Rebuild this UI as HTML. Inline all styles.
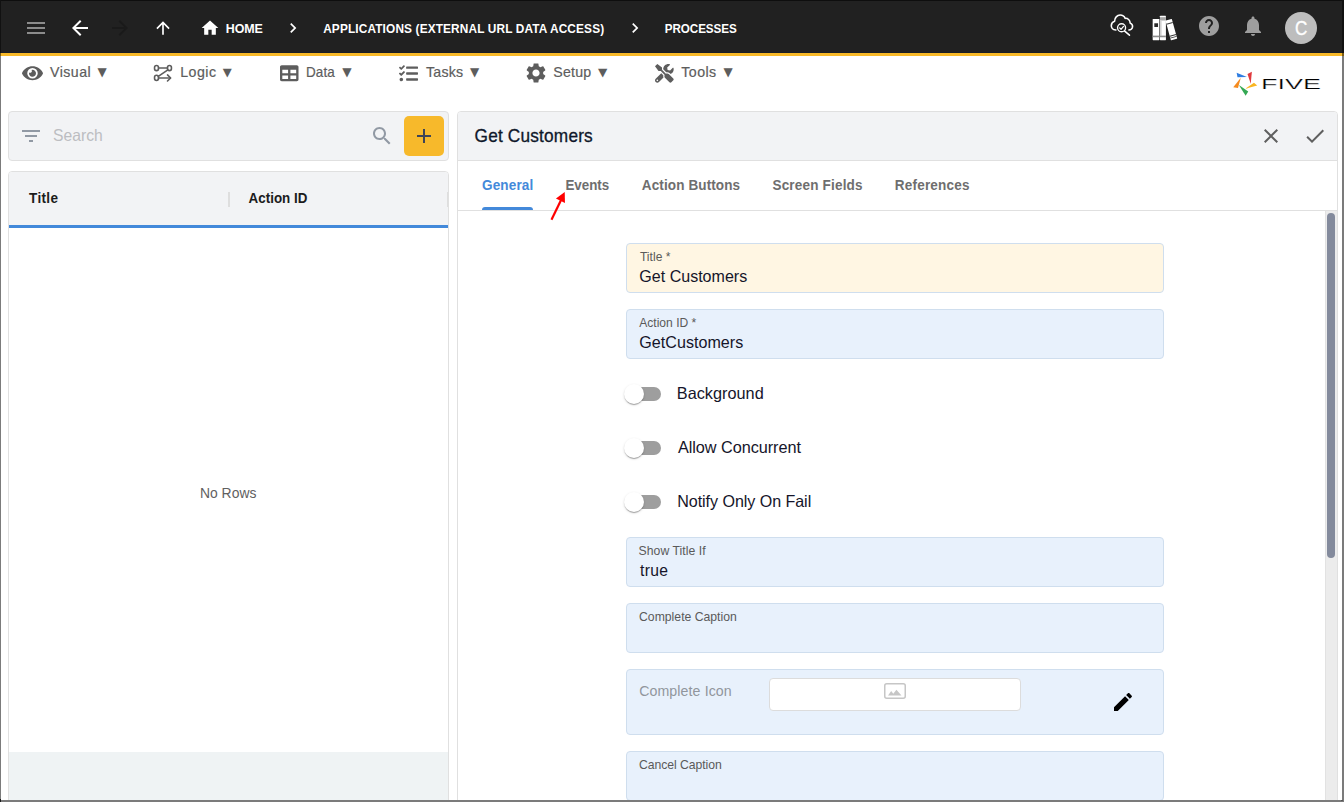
<!DOCTYPE html>
<html lang="en">
<head>
<meta charset="utf-8">
<title>Five - Processes</title>
<style>
*{box-sizing:border-box;margin:0;padding:0}
html,body{width:1344px;height:802px;overflow:hidden;background:#fff}
body{position:relative;font-family:"Liberation Sans",sans-serif;color:#222}
.a{position:absolute}
svg{display:block;position:absolute;overflow:visible}
.t{position:absolute;white-space:nowrap;line-height:1;transform-origin:0 50%}
.fr{position:absolute;z-index:50}
#appbar{left:0;top:0;width:1344px;height:52px;background:#212121}
#appbar-line{left:0;top:52px;width:1344px;height:1px;background:#1a1e27}
#yellow{left:0;top:53px;width:1344px;height:3px;background:#f8b928}
.panel{position:absolute;border:1px solid #e0e0e0;border-radius:4px;background:#f2f3f5}
.fld{position:absolute;left:626px;width:538px;height:50px;border:1px solid #cfdeee;border-radius:4px;background:#e8f1fc}
.trk{position:absolute;left:627px;width:34px;height:14px;border-radius:7px;background:#9e9e9e}
.thb{position:absolute;left:624px;width:20px;height:20px;border-radius:50%;background:#fff;box-shadow:0 2px 1px -1px rgba(0,0,0,.2),0 1px 1px 0 rgba(0,0,0,.14),0 1px 3px 0 rgba(0,0,0,.12)}
</style>
</head>
<body>
<header>
<div class="a" id="appbar"></div>
<div class="a" id="appbar-line"></div>
<div class="a" id="yellow"></div>
<svg style="left:24px;top:16px" width="24" height="24" viewBox="0 0 24 24" fill="#8c8c8c"><path d="M3 18h18v-2H3v2zm0-5h18v-2H3v2zm0-7v2h18V6H3z"/></svg>
<svg style="left:68px;top:16px" width="24" height="24" viewBox="0 0 24 24" fill="#fff"><path d="M20 11H7.83l5.59-5.59L12 4l-8 8 8 8 1.41-1.41L7.83 13H20v-2z"/></svg>
<svg style="left:108px;top:16px" width="24" height="24" viewBox="0 0 24 24" fill="#1a1a1a"><path d="M12 4l-1.41 1.41L16.17 11H4v2h12.17l-5.58 5.59L12 20l8-8z"/></svg>
<svg style="left:153px;top:18px" width="20" height="20" viewBox="0 0 24 24" fill="#fff"><path d="M4 12l1.41 1.41L11 7.83V20h2V7.83l5.58 5.59L20 12l-8-8-8 8z"/></svg>
<svg style="left:200px;top:18px" width="20" height="20" viewBox="0 0 24 24" fill="#fff"><path d="M10 20v-6h4v6h5v-8h3L12 3 2 12h3v8z"/></svg>
<span class="t" style="left:225px;top:22px;font-size:13.4px;color:#fff;font-weight:700;letter-spacing:-0.094px;transform:translateX(0.77px) scaleX(0.9300);">HOME</span>
<svg style="left:283px;top:18px" width="20" height="20" viewBox="0 0 24 24" fill="#fff"><path d="M10 6L8.59 7.41 13.17 12l-4.58 4.59L10 18l6-6z"/></svg>
<span class="t" style="left:323px;top:22px;font-size:13.4px;color:#fff;font-weight:700;letter-spacing:0.151px;transform:translateX(0.18px) scaleX(0.8850);">APPLICATIONS (EXTERNAL URL DATA ACCESS)</span>
<svg style="left:625px;top:18px" width="20" height="20" viewBox="0 0 24 24" fill="#fff"><path d="M10 6L8.59 7.41 13.17 12l-4.58 4.59L10 18l6-6z"/></svg>
<span class="t" style="left:664px;top:22px;font-size:13.4px;color:#fff;font-weight:700;letter-spacing:-0.082px;transform:translateX(0.78px) scaleX(0.8700);">PROCESSES</span>
<!-- cloud search -->
<svg style="left:1100px;top:6px" width="100" height="44" viewBox="0 0 1344 591" fill="none" stroke="#fff" stroke-linecap="round" stroke-linejoin="round">
<path stroke-width="21" d="M214 322 C172 318 150 290 152 260 C154 230 172 210 196 204 C196 158 230 122 270 122 C302 122 326 138 338 166 C373 162 403 188 406 230 C431 240 441 262 437 284 C432 306 412 322 388 322"/>
<circle cx="290" cy="292" r="54" stroke-width="18"/>
<path stroke-width="17" d="M264 294 l19 19 l33 -40"/>
<path stroke-width="21" d="M332 338 L396 392"/>
<!-- books -->
<g stroke="none">
<rect x="708" y="175" width="90" height="285" rx="6" fill="#fff"/>
<rect x="730" y="232" width="50" height="50" fill="#2a2a2a"/>
<rect x="708" y="398" width="90" height="22" fill="#909090"/>
<rect x="806" y="130" width="80" height="330" rx="6" fill="#fff"/>
<rect x="806" y="150" width="80" height="45" fill="#a8a8a8"/>
<rect x="806" y="195" width="22" height="205" fill="#d2d2d2"/>
<rect x="806" y="398" width="80" height="22" fill="#909090"/>
<g transform="translate(-6 0) rotate(-15.5 965 318)">
<rect x="921" y="180" width="88" height="276" rx="6" fill="#fff"/>
<rect x="921" y="222" width="88" height="14" fill="#3a3a3a"/>
<rect x="921" y="392" width="88" height="12" fill="#3a3a3a"/>
<rect x="921" y="418" width="88" height="10" fill="#3a3a3a"/>
</g>
</g>
</svg>
<svg style="left:1197px;top:14px" width="24" height="24" viewBox="0 0 24 24" fill="#9e9e9e"><path d="M12 2C6.48 2 2 6.48 2 12s4.48 10 10 10 10-4.48 10-10S17.52 2 12 2zm1 17h-2v-2h2v2zm2.07-7.75l-.9.92C13.45 12.900 13 13.500 13 15h-2v-.5c0-1.100.45-2.100 1.170-2.830l1.240-1.260c.37-.36.59-.86.59-1.410 0-1.100-.9-2-2-2s-2 .9-2 2H8c0-2.210 1.790-4 4-4s4 1.790 4 4c0 .88-.36 1.680-.93 2.250z"/></svg>
<svg style="left:1241px;top:14px" width="24" height="24" viewBox="0 0 24 24" fill="#9e9e9e"><path d="M12 22c1.100 0 2-.9 2-2h-4c0 1.100.89 2 2 2zm6-6v-5c0-3.070-1.640-5.640-4.500-6.320V4c0-.83-.67-1.500-1.500-1.500s-1.500.67-1.500 1.500v.68C7.630 5.360 6 7.920 6 11v5l-2 2v1h16v-1l-2-2z"/></svg>
<div class="a" style="left:1285px;top:12px;width:32px;height:32px;border-radius:50%;background:#bdbdbd"></div>
<span class="t" style="left:1294px;top:18px;font-size:20.5px;color:#fff;-webkit-text-stroke:0.35px #fff;transform:translateX(0.89px) scaleX(0.8329);">C</span>
</header>

<nav>
<svg style="left:22.2px;top:64px" width="21" height="18.67" viewBox="0 0 576 512" fill="#5d5d5d"><path d="M572.52 241.4C518.29 135.59 410.93 64 288 64S57.68 135.64 3.48 241.41a32.350 32.350 0 0 0 0 29.190C57.710 376.410 165.070 448 288 448s230.320-71.640 284.520-177.410a32.350 32.350 0 0 0 0-29.190zM288 400a144 144 0 1 1 144-144 143.930 143.930 0 0 1-144 144zm0-240a95.310 95.310 0 0 0-25.310 3.790 47.850 47.850 0 0 1-66.900 66.900A95.780 95.780 0 1 0 288 160z"/></svg>
<span class="t" style="left:50px;top:65px;font-size:14.4px;color:#5d5d5d;letter-spacing:0.468px;-webkit-text-stroke:0.2px #5d5d5d;transform:translateX(0.05px) scaleX(0.9850);">Visual</span><span class="t" style="left:97px;top:66px;font-size:12px;color:#5d5d5d;font-family:'DejaVu Sans','Liberation Sans',sans-serif;transform:translateX(0.41px) scale(0.9988,1.0109);">▼</span>
<svg style="left:140px;top:56px" width="120" height="36" viewBox="0 0 1344 403" fill="none" stroke="#5d5d5d" stroke-width="18" stroke-linecap="round" stroke-linejoin="round">
<rect x="163" y="106" width="44" height="58" rx="22"/>
<rect x="308" y="106" width="44" height="58" rx="22"/>
<rect x="163" y="216" width="44" height="58" rx="22"/>
<path d="M207 135 H308"/>
<path d="M312 156 L205 228"/>
<path d="M207 246 H340"/>
<path d="M308 212 L343 246 L308 280"/>
</svg>
<span class="t" style="left:180px;top:65px;font-size:14.4px;color:#5d5d5d;letter-spacing:0.516px;-webkit-text-stroke:0.2px #5d5d5d;transform:translateX(0.16px) scaleX(0.9850);">Logic</span><span class="t" style="left:222px;top:66px;font-size:12px;color:#5d5d5d;font-family:'DejaVu Sans','Liberation Sans',sans-serif;transform:translateX(0.86px) scale(0.9782,0.9498);">▼</span>
<svg style="left:279.6px;top:63.6px" width="18.5" height="18.5" viewBox="0 0 512 512" fill="#5d5d5d"><path d="M464 32H48C21.490 32 0 53.490 0 80v352c0 26.510 21.490 48 48 48h416c26.510 0 48-21.490 48-48V80c0-26.510-21.490-48-48-48zM224 416H64v-96h160v96zm0-160H64v-96h160v96zm224 160H288v-96h160v96zm0-160H288v-96h160v96z"/></svg>
<span class="t" style="left:306px;top:65px;font-size:14.4px;color:#5d5d5d;letter-spacing:0.078px;-webkit-text-stroke:0.2px #5d5d5d;transform:translateX(0.06px) scaleX(0.9350);">Data</span><span class="t" style="left:342px;top:66px;font-size:12px;color:#5d5d5d;font-family:'DejaVu Sans','Liberation Sans',sans-serif;transform:translateX(0.13px) scale(1.0162,0.9920);">▼</span>
<svg style="left:398.5px;top:63.6px" width="19" height="19" viewBox="0 0 512 512" fill="#5d5d5d"><path d="M139.61 35.5a12 12 0 0 0-17 0L58.930 98.810l-22.700-22.120a12 12 0 0 0-17 0L3.530 92.410a12 12 0 0 0 0 17l47.590 47.400a12.780 12.780 0 0 0 17.610 0l15.590-15.620L156.520 69a12.090 12.090 0 0 0 .09-17zm0 159.190a12 12 0 0 0-17 0l-63.680 63.720-22.700-22.100a12 12 0 0 0-17 0L3.530 252a12 12 0 0 0 0 17L51 316.500a12.770 12.770 0 0 0 17.600 0l15.700-15.690 72.200-72.220a12 12 0 0 0 .09-16.900zM64 368c-26.490 0-48.590 21.500-48.590 48S37.530 464 64 464a48 48 0 0 0 0-96zm432 16H208a16 16 0 0 0-16 16v32a16 16 0 0 0 16 16h288a16 16 0 0 0 16-16v-32a16 16 0 0 0-16-16zm0-320H208a16 16 0 0 0-16 16v32a16 16 0 0 0 16 16h288a16 16 0 0 0 16-16V80a16 16 0 0 0-16-16zm0 160H208a16 16 0 0 0-16 16v32a16 16 0 0 0 16 16h288a16 16 0 0 0 16-16v-32a16 16 0 0 0-16-16z"/></svg>
<span class="t" style="left:425px;top:65px;font-size:14.4px;color:#5d5d5d;letter-spacing:0.269px;-webkit-text-stroke:0.2px #5d5d5d;transform:translateX(0.91px) scaleX(0.9850);">Tasks</span><span class="t" style="left:470px;top:66px;font-size:12px;color:#5d5d5d;font-family:'DejaVu Sans','Liberation Sans',sans-serif;transform:translateX(0.11px) scale(0.9985,1.0074);">▼</span>
<svg style="left:524px;top:61px" width="24" height="24" viewBox="0 0 24 24" fill="#5d5d5d"><path d="M19.140 12.940c.04-.3.060-.61.060-.94 0-.32-.02-.64-.07-.94l2.030-1.580c.18-.14.230-.41.120-.61l-1.920-3.320c-.12-.22-.37-.29-.59-.22l-2.390.96c-.5-.38-1.030-.7-1.620-.94l-.36-2.540c-.04-.24-.24-.41-.48-.41h-3.840c-.24 0-.43.170-.47.410l-.36 2.540c-.59.240-1.130.57-1.620.94l-2.390-.96c-.22-.08-.47 0-.59.220L2.740 8.870c-.12.210-.08.470.12.610l2.030 1.580c-.05.3-.09.630-.09.940s.02.640.07.940l-2.030 1.580c-.18.140-.23.410-.12.610l1.920 3.320c.12.220.37.290.59.220l2.390-.96c.5.380 1.030.7 1.620.94l.36 2.540c.05.240.24.410.48.410h3.840c.24 0 .44-.17.470-.41l.36-2.540c.59-.24 1.130-.56 1.620-.94l2.390.96c.22.080.47 0 .59-.22l1.920-3.320c.12-.22.070-.47-.12-.61l-2.010-1.580zM12 15.600c-1.980 0-3.600-1.620-3.600-3.600s1.620-3.600 3.600-3.600 3.600 1.620 3.600 3.600-1.620 3.600-3.600 3.600z"/></svg>
<span class="t" style="left:553px;top:65px;font-size:14.4px;color:#5d5d5d;letter-spacing:0.212px;-webkit-text-stroke:0.2px #5d5d5d;transform:translateX(0.32px) scaleX(0.9850);">Setup</span><span class="t" style="left:597px;top:66px;font-size:12px;color:#5d5d5d;font-family:'DejaVu Sans','Liberation Sans',sans-serif;transform:translateX(0.90px) scale(1.0116,0.9441);">▼</span>
<svg style="left:654.7px;top:63.9px" width="18.7" height="18.7" viewBox="0 0 512 512" fill="#5d5d5d"><path d="M501.1 395.7L384 278.600c-23.100-23.100-57.600-27.600-85.400-13.900L192 158.100V96L64 0 0 64l96 128h62.100l106.600 106.600c-13.600 27.800-9.200 62.300 13.900 85.400l117.100 117.100c14.600 14.600 38.200 14.600 52.700 0l52.700-52.700c14.500-14.600 14.500-38.200 0-52.700zM331.700 225c28.300 0 54.900 11 74.900 31l19.400 19.400c15.800-6.900 30.800-16.500 43.800-29.500 37.100-37.100 49.700-89.300 37.900-136.700-2.200-9-13.500-12.100-20.100-5.500l-74.400 74.400-67.900-11.300L334 98.900l74.400-74.400c6.600-6.600 3.400-17.900-5.700-20.200-47.400-11.700-99.600.9-136.600 37.900-28.500 28.500-41.900 66.100-41.200 103.600l82.100 82.100c8.100-1.900 16.500-2.900 24.700-2.900zm-103.900 82l-56.700-56.700L18.700 402.800c-25 25-25 65.500 0 90.500s65.500 25 90.500 0l123.600-123.600c-7.600-19.900-9.900-41.600-5-62.700zM64 472c-13.200 0-24-10.800-24-24 0-13.300 10.700-24 24-24s24 10.700 24 24c0 13.200-10.700 24-24 24z"/></svg>
<span class="t" style="left:681px;top:65px;font-size:14.4px;color:#5d5d5d;letter-spacing:0.426px;-webkit-text-stroke:0.2px #5d5d5d;transform:translateX(0.36px) scaleX(0.9850);">Tools</span><span class="t" style="left:723px;top:66px;font-size:12px;color:#5d5d5d;font-family:'DejaVu Sans','Liberation Sans',sans-serif;transform:translateX(0.41px) scale(0.9988,1.0109);">▼</span>
<!-- FIVE logo -->
<svg style="left:1220px;top:60px" width="120" height="44" viewBox="0 0 1344 493">
<polygon points="186,143 302,190 196,192" fill="#2f7de1"/>
<polygon points="357,133 308,156 344,266" fill="#e03a3e"/>
<polygon points="380,256 417,286 283,323" fill="#f9b521"/>
<polygon points="211,281 316,352 287,400" fill="#34a853"/>
<polygon points="233,199 148,306 201,313" fill="#f58a1f"/>
<g transform="translate(459 321) scale(23.3 12.1)"><text x="0" y="0" font-family="'Liberation Sans',sans-serif" font-size="13" fill="#000" stroke="#fff" stroke-width="0.2">FIVE</text></g>
</svg>
</nav>

<main>
<section id="left">
<div class="panel" style="left:8px;top:111px;width:441px;height:50px"></div>
<svg style="left:19px;top:124px" width="24" height="24" viewBox="0 0 24 24" fill="#9199a4"><path d="M10 18h4v-2h-4v2zM3 6v2h18V6H3zm3 7h12v-2H6v2z"/></svg>
<span class="t" style="left:53px;top:127px;font-size:16.5px;color:#bcbdc1;transform:translateX(0.11px) scaleX(0.9500);">Search</span>
<svg style="left:370px;top:124px" width="24" height="24" viewBox="0 0 24 24" fill="#9199a4"><path d="M15.500 14h-.79l-.28-.27C15.410 12.590 16 11.110 16 9.500 16 5.910 13.090 3 9.500 3S3 5.910 3 9.500 5.910 16 9.500 16c1.610 0 3.090-.59 4.230-1.570l.27.280v.79l5 4.990L20.490 19l-4.990-5zm-6 0C7.010 14 5 11.990 5 9.500S7.010 5 9.500 5 14 7.010 14 9.500 11.990 14 9.500 14z"/></svg>
<div class="a" style="left:404px;top:116px;width:40px;height:40px;border-radius:5px;background:#f7b92b"></div>
<svg style="left:412px;top:124px" width="24" height="24" viewBox="0 0 24 24" fill="#3d4457"><path d="M19 13h-6v6h-2v-6H5v-2h6V5h2v6h6v2z"/></svg>

<div class="panel" style="left:8px;top:171px;width:441px;height:640px;background:#fff;overflow:hidden">
  <div class="a" style="left:0;top:0;width:439px;height:53px;background:#f2f3f5"></div>
  <div class="a" style="left:0;top:53px;width:439px;height:3px;background:#4389da"></div>
  <div class="a" style="left:0;top:580px;width:439px;height:60px;background:#eff3f4"></div>
  <div class="a" style="left:219px;top:20px;width:2px;height:15px;background:#dedede"></div>
  <div class="a" style="left:438px;top:20px;width:2px;height:15px;background:#dedede"></div>
</div>
<span class="t" style="left:29px;top:191px;font-size:14.4px;color:#1c1c1c;font-weight:700;letter-spacing:0.358px;transform:translateX(0.04px) scaleX(0.9400);">Title</span><span class="t" style="left:248px;top:191px;font-size:14.4px;color:#1c1c1c;font-weight:700;letter-spacing:0.027px;transform:translateX(0.51px) scaleX(0.9300);">Action ID</span><span class="t" style="left:199px;top:486px;font-size:14.4px;color:#606060;letter-spacing:0.039px;transform:translateX(0.88px) scaleX(0.9650);">No Rows</span>
</section>

<section id="detail">
<div class="panel" style="left:457px;top:111px;width:881px;height:700px;background:#fff;overflow:hidden">
  <div class="a" style="left:0;top:0;width:879px;height:48px;background:#f2f3f5"></div>
  <div class="a" style="left:0;top:48px;width:879px;height:1px;background:#e0e0e0"></div>
  <div class="a" style="left:0;top:98px;width:879px;height:1px;background:#e0e0e0"></div>
  <div class="a" style="left:24px;top:95px;width:51px;height:3px;background:#4389da;border-radius:3px 3px 0 0"></div>
  <div class="a" style="left:867px;top:99px;width:12px;height:600px;background:#ececec;border-left:1px solid #e2e2e2"></div>
  <div class="a" style="left:869px;top:101px;width:8px;height:345px;border-radius:4px;background:#838a9c"></div>
</div>
<span class="t" style="left:474px;top:128px;font-size:17.9px;color:#0f172a;letter-spacing:0.178px;-webkit-text-stroke:0.3px #0f172a;transform:translateX(0.56px) scaleX(0.9650);">Get Customers</span>
<svg style="left:1259px;top:124px" width="24" height="24" viewBox="0 0 24 24" fill="#5f5f5f"><path d="M19 6.410L17.590 5 12 10.590 6.410 5 5 6.410 10.590 12 5 17.590 6.410 19 12 13.410 17.590 19 19 17.590 13.410 12z"/></svg>
<svg style="left:1303px;top:124px" width="24" height="24" viewBox="0 0 24 24" fill="#5f5f5f"><path d="M9 16.170L4.830 12l-1.420 1.410L9 19 21 7l-1.410-1.410z"/></svg>
<span class="t" style="left:481px;top:178px;font-size:14.4px;color:#4389da;font-weight:700;letter-spacing:0.154px;transform:translateX(0.98px) scaleX(0.9400);">General</span><span class="t" style="left:565px;top:178px;font-size:14.4px;color:#6e6e6e;font-weight:700;letter-spacing:-0.016px;transform:translateX(0.39px) scaleX(0.9300);">Events</span><span class="t" style="left:641px;top:178px;font-size:14.4px;color:#6e6e6e;font-weight:700;letter-spacing:0.111px;transform:translateX(0.84px) scaleX(0.9400);">Action Buttons</span><span class="t" style="left:772px;top:178px;font-size:14.4px;color:#6e6e6e;font-weight:700;letter-spacing:0.189px;transform:translateX(0.44px) scaleX(0.9400);">Screen Fields</span><span class="t" style="left:894px;top:178px;font-size:14.4px;color:#6e6e6e;font-weight:700;letter-spacing:0.213px;transform:translateX(0.78px) scaleX(0.9400);">References</span>
<svg style="left:536px;top:184px" width="50" height="40" viewBox="0 0 1002 802"><path d="M310 715 L505 315" stroke="#f00" stroke-width="44" fill="none"/><polygon points="576,158 400,292 580,380" fill="#f00"/></svg>

<div class="fld" style="top:243px;background:#fff6e3"></div>
<span class="t" style="left:639px;top:251px;font-size:12.4px;color:#5a5a5a;letter-spacing:0.055px;transform:translateX(0.89px) scaleX(0.9700);">Title *</span><span class="t" style="left:639px;top:268px;font-size:16.5px;color:#15152a;transform:translateX(0.32px) scaleX(0.9720);">Get Customers</span>
<div class="fld" style="top:309px"></div>
<span class="t" style="left:639px;top:317px;font-size:12.4px;color:#5a5a5a;letter-spacing:0.010px;transform:translateX(0.15px) scaleX(0.9750);">Action ID *</span><span class="t" style="left:639px;top:334px;font-size:16.5px;color:#15152a;letter-spacing:0.018px;transform:translateX(0.32px) scaleX(0.9750);">GetCustomers</span>
<div class="trk" style="top:387px"></div><div class="thb" style="top:384px"></div><span class="t" style="left:676px;top:385px;font-size:16.5px;color:#15152a;letter-spacing:0.013px;transform:translateX(0.82px) scaleX(0.9850);">Background</span>
<div class="trk" style="top:441px"></div><div class="thb" style="top:438px"></div><span class="t" style="left:677px;top:439px;font-size:16.5px;color:#15152a;letter-spacing:-0.047px;transform:translateX(0.88px) scaleX(0.9850);">Allow Concurrent</span>
<div class="trk" style="top:495px"></div><div class="thb" style="top:492px"></div><span class="t" style="left:677px;top:493px;font-size:16.5px;color:#15152a;letter-spacing:-0.058px;transform:translateX(0.24px) scaleX(0.9750);">Notify Only On Fail</span>
<div class="fld" style="top:537px"></div>
<span class="t" style="left:638px;top:545px;font-size:12.4px;color:#5a5a5a;letter-spacing:0.042px;transform:translateX(0.58px) scaleX(0.9850);">Show Title If</span><span class="t" style="left:640px;top:562px;font-size:16.5px;color:#15152a;letter-spacing:0.280px;transform:translateX(0.05px) scaleX(0.9500);">true</span>
<div class="fld" style="top:603px"></div>
<span class="t" style="left:639px;top:611px;font-size:12.4px;color:#5a5a5a;letter-spacing:0.004px;transform:translateX(0.05px) scaleX(0.9850);">Complete Caption</span>
<div class="fld" style="top:669px;height:66px"></div>
<span class="t" style="left:639px;top:684px;font-size:14.4px;color:#91969d;letter-spacing:0.100px;transform:translateX(0.15px) scaleX(0.9850);">Complete Icon</span>
<div class="a" style="left:769px;top:678px;width:252px;height:33px;border:1px solid #dcdcdc;border-radius:4px;background:#fff"></div>
<svg style="left:884px;top:683px" width="22" height="16" viewBox="0 0 22 16"><rect x="0.75" y="0.75" width="20.5" height="14.500" rx="2" fill="none" stroke="#c6c6c6" stroke-width="1.500"/><path d="M4 12.500 L7.200 8 L9.300 10.800 L12.400 6.800 L17.500 12.500 Z" fill="#c6c6c6"/></svg>
<svg style="left:1110.600px;top:689.700px" width="24" height="24" viewBox="0 0 24 24" fill="#000"><path d="M3 17.250V21h3.750L17.810 9.940l-3.750-3.750L3 17.250zM20.710 7.040c.39-.39.390-1.020 0-1.410l-2.340-2.340c-.39-.39-1.020-.39-1.410 0l-1.830 1.830 3.750 3.750 1.830-1.830z"/></svg>
<div class="fld" style="top:751px"></div>
<span class="t" style="left:638px;top:759px;font-size:12.4px;color:#5a5a5a;letter-spacing:-0.049px;transform:translateX(0.90px) scaleX(0.9850);">Cancel Caption</span>
</section>
</main>

<div class="fr" style="left:0;top:0;width:1344px;height:1px;background:#0e0e0e"></div>
<div class="fr" style="left:0;top:0;width:1px;height:53px;background:#111"></div>
<div class="fr" style="left:0;top:53px;width:1px;height:3px;background:#7a5c14"></div>
<div class="fr" style="left:0;top:56px;width:1px;height:746px;background:#7b7b7b"></div>
<div class="fr" style="left:1342px;top:0;width:2px;height:802px;background:#7b7b7b"></div>
<div class="fr" style="left:1342px;top:0;width:2px;height:53px;background:#111"></div>
<div class="fr" style="left:1342px;top:53px;width:2px;height:3px;background:#7c5c14"></div>
<div class="fr" style="left:0;top:800px;width:1344px;height:2px;background:#7b7b7b"></div>
<div class="fr" style="left:0;top:799px;width:1px;height:3px;background:#1a1a1a"></div>
<div class="fr" style="left:1341px;top:800px;width:2px;height:1px;background:#555"></div>
</body>
</html>
